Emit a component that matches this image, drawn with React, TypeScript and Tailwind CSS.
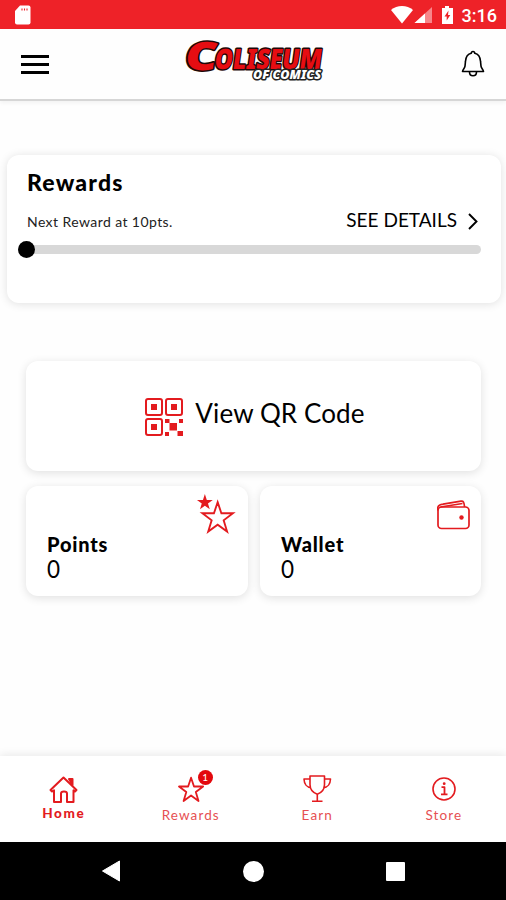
import type { ReactNode } from "react";

const STAR = "M12 1.5l2.6 7.8h8.1l-6.5 4.900 2.4 7.900L12 17.300l-6.600 4.800 2.400-7.900-6.500-4.900h8.100z";

function StatusBar() {
  return (
    <div className="flex h-[29px] shrink-0 items-center justify-between bg-[#ee2228] pl-[14px] pr-[9px] text-white">
      <svg className="mt-[1px]" width="18" height="20" viewBox="0 0 18 20">
        <path d="M6 0.5h8.500a2 2 0 0 1 2 2v15a2 2 0 0 1-2 2H3a2 2 0 0 1-2-2V6z" fill="currentColor" />
        <path d="M8 3.500v2M10.500 3.500v2M13 3.500v2" stroke="#ee2228" strokeWidth="1.100" />
      </svg>
      <div className="flex items-center">
        <svg width="64" height="20" viewBox="0 0 64 20">
          <path d="M1 5C7-.3 17-.3 23 5L12 18.500z" fill="currentColor" />
          <path d="M42 2v16H24.500z" fill="#f7868a" />
          <path d="M35 8.500V18H24.500z" fill="currentColor" />
          <path d="M55 1h4v2h4v16H52V3h3z" fill="currentColor" />
          <path d="M58.500 5.500l-4 6h2.200v4l3.600-5.500H58z" fill="#ee2228" />
        </svg>
        <span className="ml-[8px] mt-[3px] font-[Roboto] text-[18px] font-medium leading-5">3:16</span>
      </div>
    </div>
  );
}

function Logo() {
  return (
    <svg
      className="overflow-visible"
      width="146"
      height="52"
      viewBox="0 0 146 52"
      fontFamily="'Noto Sans', sans-serif"
      fontWeight="900"
      paintOrder="stroke"
      strokeLinejoin="round"
    >
      <g transform="skewX(-8)" fill="#e60d12" stroke="#1d0808" strokeWidth="3">
        <text x="6" y="32" fontSize="39" textLength="32" lengthAdjust="spacingAndGlyphs">C</text>
        <text x="36" y="31.500" fontSize="28" textLength="107" lengthAdjust="spacingAndGlyphs">OLISEUM</text>
      </g>
      <text
        x="71"
        y="41"
        fontSize="12.500"
        fontStyle="italic"
        textLength="68"
        lengthAdjust="spacingAndGlyphs"
        fill="#fff"
        stroke="#222"
        strokeWidth="3"
      >
        OF COMICS
      </text>
    </svg>
  );
}

function Header() {
  return (
    <header className="flex h-[72px] shrink-0 items-center justify-between border-b-2 border-[#d6d6d6] pl-[21px] pr-[21px] shadow-[0_2px_4px_rgba(0,0,0,0.05)]">
      <div className="flex w-7 flex-col gap-[5px]">
        <span className="h-[3px] bg-black" />
        <span className="h-[3px] bg-black" />
        <span className="h-[3px] bg-black" />
      </div>
      <Logo />
      <svg width="24" height="28" viewBox="0 0 24 28" fill="none" stroke="#000" strokeWidth="1.600" strokeLinejoin="round">
        <path d="M10.300 3.200c0-2.300 3.400-2.300 3.400 0 4 .8 5.500 4 5.800 8l.5 5c.2 2 2.200 3 2.500 5.300h-21C1.800 19.200 3.800 18.200 4 16.200l.5-5c.3-4 1.800-7.200 5.800-8z" />
        <path d="M8.500 22c0 5 7 5 7 0" />
      </svg>
    </header>
  );
}

function RewardsCard() {
  return (
    <section className="ml-[7px] mr-[5px] mt-[54px] h-[148px] rounded-[12px] bg-white pl-5 pr-5 pt-[15px] shadow-[0_1px_10px_rgba(0,0,0,0.12)]">
      <h2 className="-mt-px mb-px text-[23px] font-black leading-[26px] tracking-[1.200px]">Rewards</h2>
      <div className="flex h-[45px] items-center justify-between">
        <span className="mt-[5px] text-[14px] tracking-[0.420px] text-[#222]">Next Reward at 10pts.</span>
        <span className="mt-[3px] flex items-center gap-[11px] text-[19px]">
          SEE DETAILS
          <svg className="mr-[3px] mt-[2px]" width="10" height="17" viewBox="0 0 10 17" fill="none" stroke="#000" strokeWidth="1.900">
            <path d="M1 1l7.500 7.500L1 16" />
          </svg>
        </span>
      </div>
      <div className="-ml-[9px] flex items-center">
        <span className="z-10 size-[17px] rounded-full bg-black" />
        <span className="-ml-2 h-[9px] grow rounded-r-full bg-[#d8d8d8]" />
      </div>
    </section>
  );
}

function QrIcon() {
  return (
    <svg className="mt-[1px]" width="38" height="38" viewBox="0 0 38 38" fill="none" stroke="#e31b1f" strokeWidth="2">
      <rect x="1" y="1" width="16" height="16" rx="2" />
      <rect x="21" y="1" width="16" height="16" rx="2" />
      <rect x="1" y="21" width="16" height="16" rx="2" />
      <g fill="#e31b1f" stroke="none">
        <path d="M6 6h6v6H6zM26 6h6v6h-6zM6 26h6v6H6z" />
        <path d="M20 21h4.500v4H20zM34 21h4v4h-4zM24.500 25h7.500v7.500h-7.500zM20 34h4v4h-4zM32.500 33h5.500v5h-5.500z" />
      </g>
    </svg>
  );
}

function StatCard({ label, value, icon }: { label: string; value: number; icon: ReactNode }) {
  return (
    <div className="flex h-[110px] justify-between rounded-[12px] bg-white pl-[21px] pr-3 shadow-[0_2px_10px_rgba(0,0,0,0.12)]">
      <div className="pt-[47px]">
        <div className="text-[20px] font-black leading-[23px] tracking-[0.800px]">{label}</div>
        <div className="mt-px origin-left scale-x-90 text-[25px] leading-[23px]">{value}</div>
      </div>
      {icon}
    </div>
  );
}

function StarsIcon() {
  return (
    <svg className="mt-[7px]" width="40" height="43" viewBox="0 0 40 43">
      <path transform="translate(0 0) scale(0.740)" d={STAR} fill="#e31b1f" />
      <path transform="translate(4.500 7) scale(1.430)" d={STAR} fill="none" stroke="#e31b1f" strokeWidth="1.300" />
    </svg>
  );
}

function WalletIcon() {
  return (
    <svg className="-mr-px mt-[14px]" width="33" height="30" viewBox="0 0 33 30" fill="none" stroke="#e31b1f" strokeWidth="1.700">
      <rect x="1" y="7" width="31" height="21.500" rx="3.500" />
      <path d="M1 10.500C0 6 2 4.700 6 4.200L24 1.200c2.500-.4 3 1 3.600 5.800M3.500 7l22-3.500" />
      <circle cx="24.500" cy="17.500" r="2.200" fill="#e31b1f" stroke="none" />
    </svg>
  );
}

const TABS = [
  {
    label: "Home",
    active: true,
    icon: (
      <g strokeWidth="2">
        <path d="M1.500 15L14.500 2.500l13 12.500-1.500 1.500-1.500-1.200V27h-6.500v-8.500q0-2-3-2t-3 2V27H5V15.300l-2 1.200z" />
        <path d="M20 4h3.500v6z" fill="currentColor" />
      </g>
    ),
  },
  { label: "Rewards", badge: 1, icon: <path transform="translate(1.500 1) scale(1.130)" d={STAR} /> },
  {
    label: "Earn",
    icon: (
      <>
        <path d="M8 1h14.500v8.500c0 5-2.500 8-7.200 9.700C10.500 17.500 8 14.500 8 9.500zM15.300 19v7M10 26.300h10.500" />
        <path d="M8 4H2c.2 5 2.800 8.500 7 8.500M22.500 4h6c-.2 5-2.800 8.500-7 8.500" />
      </>
    ),
  },
  {
    label: "Store",
    icon: (
      <>
        <circle cx="15" cy="14" r="11" />
        <path d="M12.500 12.200h3v7M12 19.300h6.500" strokeWidth="1.800" />
        <circle cx="15.200" cy="8.700" r="1.400" fill="currentColor" stroke="none" />
      </>
    ),
  },
];

function TabBar() {
  return (
    <nav className="grid h-[86px] shrink-0 grid-cols-4 bg-white text-[#e31b1f] shadow-[0_-2px_8px_rgba(0,0,0,0.08)]">
      {TABS.map(({ label, icon, active, badge }) => (
        <div key={label} className="flex flex-col items-center pt-[19px]">
          <div className="relative">
            <svg className="overflow-visible" width="28" height="28" viewBox="0 0 28 28" fill="none" stroke="currentColor" strokeWidth="1.600" strokeLinejoin="round">
              {icon}
            </svg>
            {badge && (
              <span className="absolute -top-[5px] left-[22px] flex size-[15px] items-center justify-center rounded-full bg-[#e3080d] text-[10px] text-white">
                {badge}
              </span>
            )}
          </div>
          <span
            className={
              active
                ? "ml-[1px] text-[13.500px] font-black leading-5 tracking-[1.600px]"
                : "mt-[2px] ml-[2px] text-[13.500px] leading-5 tracking-[1.100px] text-[#e65053]"
            }
          >
            {label}
          </span>
        </div>
      ))}
    </nav>
  );
}

function AndroidNav() {
  return (
    <div className="flex h-[58px] shrink-0 items-center justify-between bg-black pl-[101px] pr-[101px]">
      <svg width="20" height="22" viewBox="0 0 20 22">
        <path d="M1.500 11L18.500 1v20z" fill="#fff" stroke="#fff" strokeLinejoin="round" />
      </svg>
      <span className="size-[21px] rounded-full bg-white" />
      <span className="mt-px size-[19px] rounded-[1px] bg-white" />
    </div>
  );
}

export default function App() {
  return (
    <div className="flex h-[900px] w-[506px] flex-col overflow-hidden bg-[#fefefe] font-[Lato,sans-serif] text-black">
      <StatusBar />
      <Header />
      <main className="grow">
        <RewardsCard />
        <div className="ml-[26px] mr-[25px] mt-[58px]">
          <button className="flex h-[110px] w-full items-center justify-center gap-[12px] rounded-[12px] bg-white pl-[3px] text-[26px] shadow-[0_2px_10px_rgba(0,0,0,0.12)]">
            <QrIcon />
            <span className="-mt-[6px] tracking-[0.120px]">View QR Code</span>
          </button>
          <div className="mt-[15px] grid grid-cols-[222px_1fr] gap-[12px]">
            <StatCard label="Points" value={0} icon={<StarsIcon />} />
            <StatCard label="Wallet" value={0} icon={<WalletIcon />} />
          </div>
        </div>
      </main>
      <TabBar />
      <AndroidNav />
    </div>
  );
}
